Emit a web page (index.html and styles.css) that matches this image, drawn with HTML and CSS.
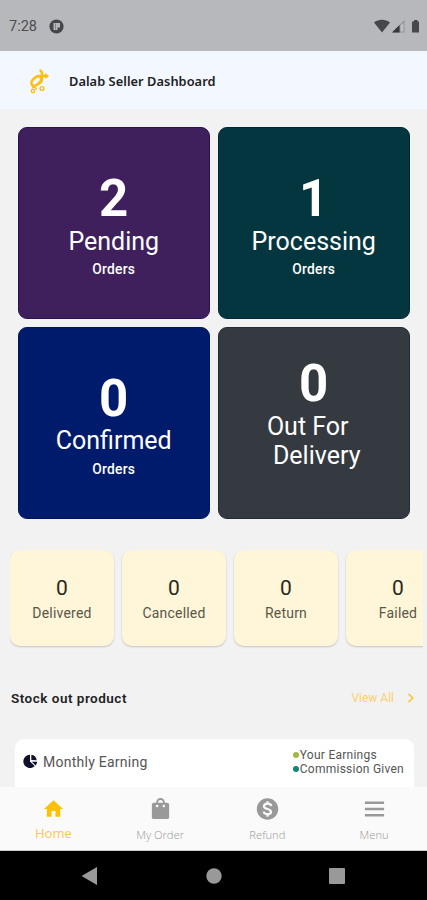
FILE: index.html
```html
<!DOCTYPE html>
<html lang="en">
<head>
<meta charset="utf-8">
<title>Dalab Seller Dashboard</title>
<link rel="stylesheet" href="styles.css">
</head>
<body>
<div class="phone">
  <div class="status">
    <span class="clock">7:28</span>
    <svg class="status-app" width="15" height="15" viewBox="0 0 15 15"><circle cx="7.5" cy="7.5" r="7.1" fill="#45474b"/><path d="M4.500 4H11v4.500H8.500V11h-4z" fill="#b7b8bc"/><path d="M6.500 4.500v6" stroke="#85868a" fill="none"/></svg>
    <svg class="status-icons" width="47" height="15" viewBox="0 0 47 15"><path d="M0 3.500C4.500-.3 11.500-.3 16 3.500L8 13.500z" fill="#45474b"/><path d="M18 13.500L30.500 1v12.500z" fill="#8f9095"/><path d="M18 13.500l7.500-7.500v7.500z" fill="#35373b"/><path d="M26.500 6.500l3-3v9h-3z" fill="#c0c1c4"/><path d="M38 2.500h2V1h3.500v1.500H45v11h-7z" fill="#45474b"/></svg>
  </div>
  <header class="appbar">
    <svg class="logo" width="22" height="28" viewBox="0 0 22 28" fill="none" stroke="#fdc010" stroke-linecap="round" stroke-linejoin="round"><ellipse cx="7.300" cy="14" rx="5.700" ry="3.500" transform="rotate(-42 7.300 14)" stroke-width="2.700"/><path d="M11.500 3.500L13 5.500V12Q12.500 15.500 10 16.500" stroke-width="2.500"/><path d="M8.500 9L18 9" stroke-width="2.400"/><path d="M16.500 7l3 2-2.500 2z" fill="#fdc010" stroke-width="1"/><path d="M3.500 20.500Q6 19.700 7.500 22" stroke-width="1.400"/><circle cx="4" cy="24" r="1.700" stroke-width="1.400"/><circle cx="13" cy="21.500" r="1.900" stroke-width="1.400"/></svg>
    <h1>Dalab Seller Dashboard</h1>
  </header>
  <main>
    <section class="orders">
      <article class="card pending"><b>2</b><span class="name">Pending</span><small>Orders</small></article>
      <article class="card processing"><b>1</b><span class="name">Processing</span><small>Orders</small></article>
      <article class="card confirmed"><b>0</b><span class="name">Confirmed</span><small>Orders</small></article>
      <article class="card delivery"><b>0</b><span class="name"><span class="line first">Out For</span><span class="line second">Delivery</span></span></article>
    </section>
    <section class="stats">
      <div class="stat"><b>0</b><span>Delivered</span></div>
      <div class="stat"><b>0</b><span>Cancelled</span></div>
      <div class="stat"><b>0</b><span>Return</span></div>
      <div class="stat"><b>0</b><span>Failed</span></div>
    </section>
    <section class="stock">
      <h2>Stock out product</h2>
      <span class="view">View All</span>
      <svg width="8" height="10" viewBox="0 0 8 10"><path d="M1.500 1L5.800 5l-4.300 4" fill="none" stroke="#ffc02c" stroke-width="1.500"/></svg>
    </section>
    <section class="earning">
      <svg width="15" height="15" viewBox="0 0 15 15"><path d="M7 .8A6.600 6.600 0 1 0 11.700 12L7 7.500z" fill="#10102c"/><path d="M8.300.8a6.200 6.200 0 0 1 5.400 5.500L8.300 6z" fill="#15152f"/><path d="M8.800 7.700h5.300a6 6 0 0 1-1.500 3.700z" fill="#10102c"/></svg>
      <span class="title">Monthly Earning</span>
      <div class="legend"><div class="yours"><i></i><span>Your Earnings</span></div><div class="commission"><i></i><span>Commission Given</span></div></div>
    </section>
  </main>
  <nav class="tabs">
    <div class="tab active"><svg width="24" height="24" viewBox="0 0 24 24"><path d="M10 20.500v-6h4v6h5v-8h3l-10-9-10 9h3v8z" fill="currentColor"/></svg><span>Home</span></div>
    <div class="tab order"><svg width="24" height="24" viewBox="0 0 24 24"><path d="M5 6h14q2 0 2 2v13q0 2-2 2H5q-2 0-2-2V8q0-2 2-2z" fill="currentColor"/><path d="M8.500 9.500V5.500a3.500 3.500 0 0 1 7 0v4" fill="none" stroke="currentColor" stroke-width="2"/><circle cx="8.500" cy="9.500" r="1.300" fill="#fafafa"/><circle cx="15.500" cy="9.500" r="1.300" fill="#fafafa"/></svg><span>My Order</span></div>
    <div class="tab refund"><svg width="24" height="24" viewBox="0 0 24 24"><circle cx="12" cy="12.500" r="11.200" fill="currentColor"/><path d="M16 9.500Q15.500 7 12 7T8.300 9.700q.2 1.800 3.700 2.800t3.700 3Q15.500 18 12 18T8 15.300M12 4.500V7m0 11v2.500" fill="none" stroke="#fafafa" stroke-width="2.300"/></svg><span>Refund</span></div>
    <div class="tab menu"><svg width="24" height="24" viewBox="0 0 24 24"><path d="M2 6h20M2 12.500h20M2 19h20" stroke="currentColor" stroke-width="2.500"/></svg><span>Menu</span></div>
  </nav>
  <footer class="system">
    <svg width="18" height="20" viewBox="0 0 18 20"><path d="M.5 10L16 1v18z" fill="#999"/></svg>
    <svg width="16" height="16" viewBox="0 0 16 16"><circle cx="8" cy="8" r="7.700" fill="#999"/></svg>
    <svg width="16" height="16" viewBox="0 0 16 16"><rect width="16" height="16" rx="1" fill="#999"/></svg>
  </footer>
</div>
</body>
</html>
```
FILE: styles.css
```css
* { box-sizing: border-box; }
body { margin: 0; background: #f2f2f2; font-family: Roboto, "Liberation Sans", sans-serif; }
.phone { width: 427px; height: 900px; display: flex; flex-direction: column; overflow: hidden; }
svg { display: block; flex: none; }
h1, h2 { margin: 0; white-space: nowrap; }
.status { height: 51px; flex: none; background: #b7b8bc; display: flex; align-items: center; padding: 2px 6px 0 9px; color: #4b4d51; }
.clock { font-size: 14.500px; width: 40px; }
.status-icons { margin-left: auto; }
.appbar { height: 58px; flex: none; background: #f3f7ff; display: flex; align-items: center; padding: 2px 0 0 29px; }
.appbar h1 { margin-left: 18px; font: 600 12.800px/20px "Noto Sans", sans-serif; letter-spacing: .05px; color: #202124; }
main { flex: 1; min-height: 0; overflow: hidden; }
.orders { display: grid; grid-template-columns: 191.500px 191.500px; grid-auto-rows: 191.500px; gap: 8.500px; padding: 18px 0 0 18px; }
.card { border-radius: 9px; color: #fff; display: flex; flex-direction: column; align-items: center; padding-top: 44px; }
.card b { font-size: 51px; line-height: 54px; font-weight: 700; }
.name { font-size: 25px; line-height: 29px; margin-top: 1px; }
.card small { font-size: 13.800px; line-height: 18px; margin-top: 4px; font-weight: 500; letter-spacing: .25px; }
.pending { background: #40205c; border: 1px solid #271354; }
.processing { background: #04363f; border: 1px solid #042733; }
.confirmed { background: #001b6b; border: 1px solid #001460; }
.delivery { background: #343a40; border: 1px solid #202c3a; padding-top: 29px; }
.confirmed .name { margin-top: 0; }
.confirmed small { margin-top: 5px; }
.line { display: block; }
.first { padding-right: 12px; text-align: center; }
.second { padding-left: 6px; }
.stats { display: flex; gap: 8px; margin: 31px 4px 0 10px; padding-bottom: 3px; overflow: hidden; }
.stat { width: 104px; height: 96px; flex: none; border-radius: 10px; background: #fff6da; box-shadow: 0 1px 2px #0003; display: flex; flex-direction: column; align-items: center; padding-top: 26px; color: #5a5647; }
.stat b { font-size: 21px; line-height: 25px; font-weight: 400; color: #29271f; }
.stat span { font-size: 14px; line-height: 18px; margin-top: 3px; letter-spacing: .2px; }
.stock { display: flex; align-items: center; height: 22px; margin-top: 38px; padding: 0 12px 0 11px; }
.stock h2 { font-size: 13.500px; line-height: 20px; font-weight: 600; letter-spacing: .5px; color: #222; }
.view { margin: 0 13px 0 auto; color: #ffcf70; font-size: 12px; }
.earning { height: 60px; margin: 30px 13px 0 15px; padding: 0 10px 0 8px; border-radius: 9px; background: #fff; display: flex; align-items: flex-start; color: #555; }
.earning > svg { margin-top: 15px; }
.title { font-size: 14px; line-height: 20px; margin: 13px 0 0 5px; letter-spacing: .25px; }
.legend { margin: 9px 0 0 auto; font-size: 12px; line-height: 14.500px; letter-spacing: .25px; }
.legend div { display: flex; align-items: center; }
.legend i { width: 6px; height: 6px; border-radius: 50%; margin-right: 1px; }
.yours i { background: #a1b944; }
.commission i { background: #118675; }
.tabs { height: 64px; flex: none; display: grid; grid-template-columns: repeat(4, 1fr); background: #fafafa; border-bottom: 1px solid #ccc; }
.tab { display: flex; flex-direction: column; align-items: center; padding-top: 10px; color: #999; font-family: "Open Sans", sans-serif; }
.tab svg { width: 23px; height: 23px; }
.tab span { font-size: 11.200px; line-height: 16px; margin-top: 7px; font-weight: 300; }
.refund, .menu { padding-left: 1px; }
.tab.active { color: #ffc107; }
.active span { color: #ffc653; font-size: 13px; margin-top: 5px; font-weight: 400; }
.system { height: 49px; flex: none; background: #000; display: flex; align-items: center; justify-content: space-between; padding: 0 82px 0 81px; }
```
